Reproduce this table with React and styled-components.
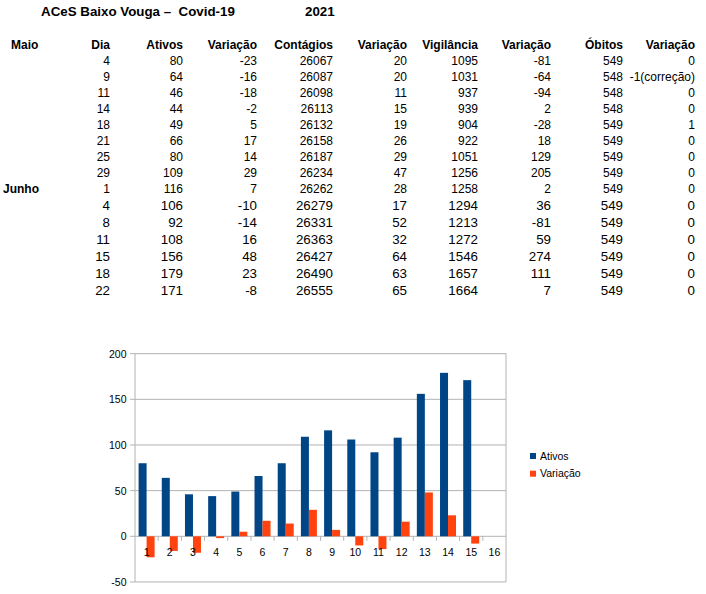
import React from "react";
import styled, { createGlobalStyle } from "styled-components";

const GlobalStyle = createGlobalStyle`
  body {
    margin: 0;
    background: #fff;
    font-family: "Liberation Sans", Arial, sans-serif;
    color: #000;
  }
`;

const COLS = "50px 49px 73px 74px 76px 74px 71px 73px 72px 72px";

const Page = styled.div`
  width: 706px;
  height: 594px;
  overflow: hidden;
`;

const Sheet = styled.div`
  padding-left: 11px;
`;

const TitleRow = styled.div`
  display: flex;
  margin-top: 4px;
  padding-left: 30px;
  height: 16px;
  line-height: 16px;
  font-size: 13.33px;
  font-weight: 700;
  white-space: pre;
`;

const TitleText = styled.span`
  width: 264px;
`;

const HeaderRow = styled.div`
  display: grid;
  grid-template-columns: ${COLS};
  margin-top: 17px;
  height: 16px;
  line-height: 16px;
  font-size: 12px;
  font-weight: 700;
`;

const Row = styled.div`
  display: grid;
  grid-template-columns: ${COLS};
  height: ${(p) => (p.$big ? 17 : 16)}px;
  line-height: ${(p) => (p.$big ? 17 : 16)}px;
  font-size: ${(p) => (p.$big ? 13.33 : 12)}px;
`;

const Label = styled.span`
  font-weight: 700;
  font-size: 12px;
  text-align: left;
  white-space: nowrap;
  margin-left: ${(p) => (p.$outdent ? -8 : 0)}px;
`;

const Cell = styled.span`
  text-align: right;
  white-space: nowrap;
`;

const ChartWrap = styled.div`
  margin-top: 40px;
  padding-left: 90px;
  height: 254px;
`;

const AxisText = styled.text`
  font-family: "Liberation Sans", Arial, sans-serif;
  font-size: 10.5px;
  fill: #000;
`;

const headers = ["Dia", "Ativos", "Variação", "Contágios", "Variação", "Vigilância", "Variação", "Óbitos", "Variação"];

const rows = [
  ["", 4, 80, -23, 26067, 20, 1095, -81, 549, 0],
  ["", 9, 64, -16, 26087, 20, 1031, -64, 548, "-1(correção)"],
  ["", 11, 46, -18, 26098, 11, 937, -94, 548, 0],
  ["", 14, 44, -2, 26113, 15, 939, 2, 548, 0],
  ["", 18, 49, 5, 26132, 19, 904, -28, 549, 1],
  ["", 21, 66, 17, 26158, 26, 922, 18, 549, 0],
  ["", 25, 80, 14, 26187, 29, 1051, 129, 549, 0],
  ["", 29, 109, 29, 26234, 47, 1256, 205, 549, 0],
  ["Junho", 1, 116, 7, 26262, 28, 1258, 2, 549, 0],
  ["", 4, 106, -10, 26279, 17, 1294, 36, 549, 0, true],
  ["", 8, 92, -14, 26331, 52, 1213, -81, 549, 0, true],
  ["", 11, 108, 16, 26363, 32, 1272, 59, 549, 0, true],
  ["", 15, 156, 48, 26427, 64, 1546, 274, 549, 0, true],
  ["", 18, 179, 23, 26490, 63, 1657, 111, 549, 0, true],
  ["", 22, 171, -8, 26555, 65, 1664, 7, 549, 0, true],
];

const BLUE = "#004586";
const RED = "#ff420e";
const GRID = "#b3b3b3";

// plot geometry inside the svg
const L = 45;
const R = 416;
const ZERO = 197.3;
const K = 0.9132;
const CAT = (R - L) / 16;
const yOf = (v) => ZERO - v * K;

function Chart() {
  const ativos = rows.map((r) => r[2]);
  const varia = rows.map((r) => r[3]);
  const ticks = [200, 150, 100, 50, 0, -50];

  return (
    <svg width="520" height="254" viewBox="0 0 520 254">
      {ticks.map((t) => (
        <g key={t}>
          <line x1={40} x2={R} y1={yOf(t)} y2={yOf(t)} stroke={GRID} strokeWidth="1" />
          <AxisText x={36.5} y={yOf(t)} textAnchor="end" dominantBaseline="central">
            {t}
          </AxisText>
        </g>
      ))}
      <line x1={L} x2={L} y1={yOf(200)} y2={yOf(-50)} stroke={GRID} strokeWidth="1" />
      <line x1={R} x2={R} y1={yOf(200)} y2={yOf(-50)} stroke={GRID} strokeWidth="1" />
      {Array.from({ length: 15 }, (_, i) => (
        <line
          key={i}
          x1={L + (i + 1) * CAT}
          x2={L + (i + 1) * CAT}
          y1={ZERO}
          y2={ZERO + 4.5}
          stroke={GRID}
          strokeWidth="1"
        />
      ))}
      {ativos.map((v, i) => {
        const c = L + (i + 0.5) * CAT;
        const d = varia[i];
        return (
          <g key={i}>
            <rect x={c - 8} y={yOf(v)} width={8} height={v * K} fill={BLUE} />
            <rect
              x={c}
              y={d >= 0 ? yOf(d) : ZERO}
              width={8}
              height={Math.abs(d) * K}
              fill={RED}
            />
          </g>
        );
      })}
      {Array.from({ length: 16 }, (_, i) => (
        <AxisText
          key={i}
          x={L + (i + 0.5) * CAT}
          y={212.7}
          textAnchor="middle"
          dominantBaseline="central"
        >
          {i + 1}
        </AxisText>
      ))}
      <rect x={440} y={114} width={6} height={6} fill={BLUE} />
      <AxisText x={450} y={116.8} dominantBaseline="central">
        Ativos
      </AxisText>
      <rect x={440} y={131.7} width={6} height={6} fill={RED} />
      <AxisText x={450} y={134.4} dominantBaseline="central">
        Variação
      </AxisText>
    </svg>
  );
}

export default function App() {
  return (
    <Page>
      <GlobalStyle />
      <Sheet>
        <TitleRow>
          <TitleText>{"ACeS Baixo Vouga –  Covid-19"}</TitleText>
          <span>2021</span>
        </TitleRow>
        <HeaderRow>
          <Label>Maio</Label>
          {headers.map((h, i) => (
            <Cell key={i}>{h}</Cell>
          ))}
        </HeaderRow>
        {rows.map((r, i) => (
          <Row key={i} $big={r[10]}>
            <Label $outdent={r[0] === "Junho"}>{r[0]}</Label>
            {r.slice(1, 10).map((v, j) => (
              <Cell key={j}>{v}</Cell>
            ))}
          </Row>
        ))}
      </Sheet>
      <ChartWrap>
        <Chart />
      </ChartWrap>
    </Page>
  );
}
